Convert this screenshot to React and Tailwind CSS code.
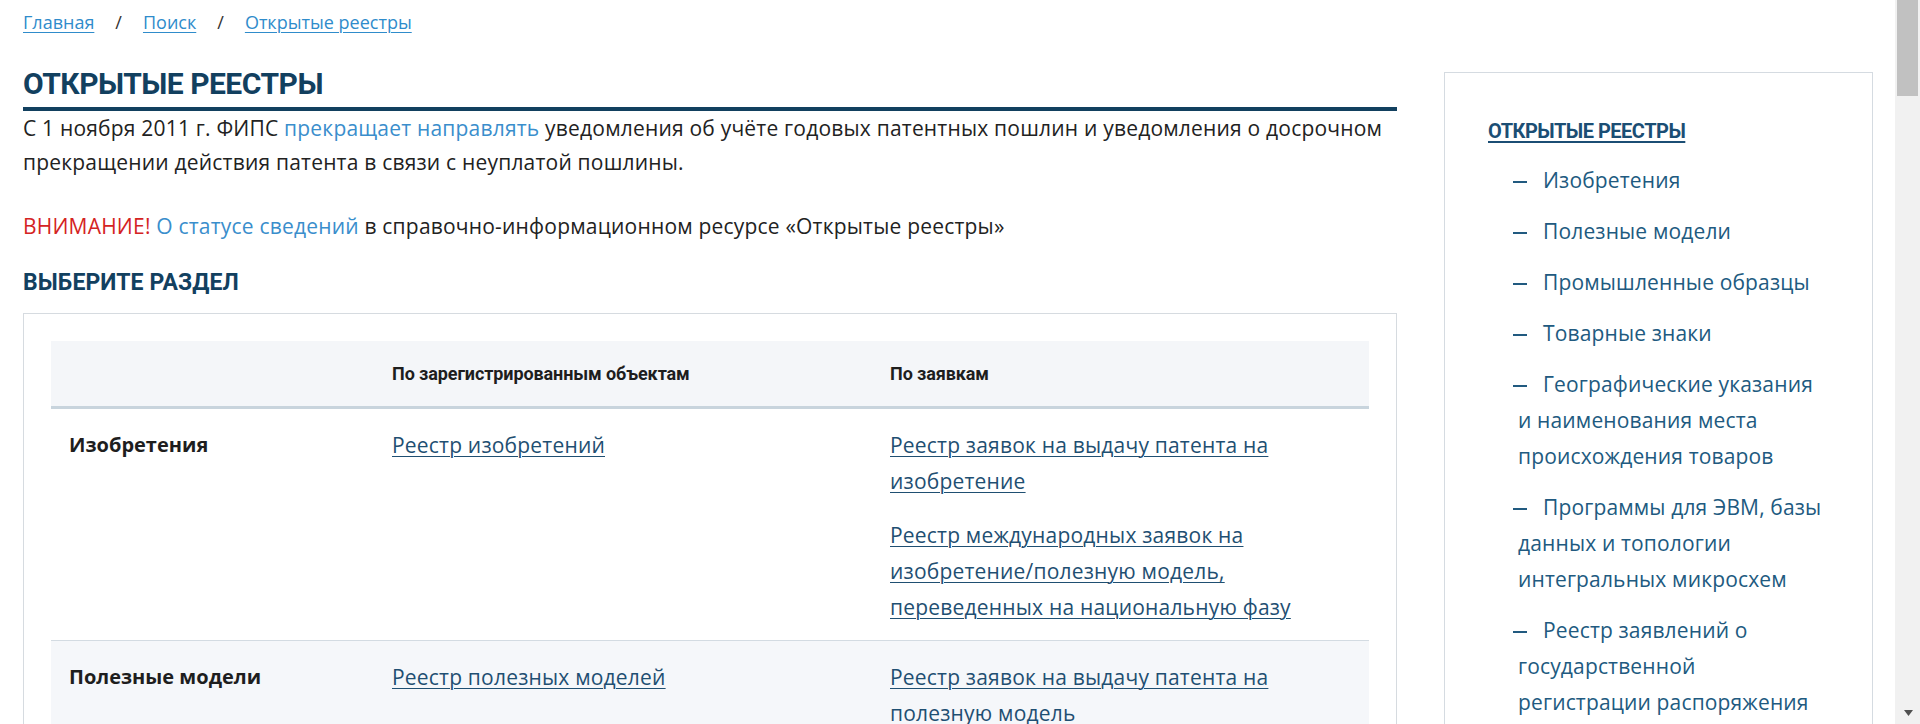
const sidebarItems = [
  ["Изобретения"],
  ["Полезные модели"],
  ["Промышленные образцы"],
  ["Товарные знаки"],
  ["Географические указания", "и наименования места", "происхождения товаров"],
  ["Программы для ЭВМ, базы", "данных и топологии", "интегральных микросхем"],
  ["Реестр заявлений о", "государственной", "регистрации распоряжения", "исключительным правом"],
];

function Lines({ lines }) {
  return lines.map((l, i) => (
    <span key={i}>
      {i > 0 && <br />}
      {l}
    </span>
  ));
}

function TLink({ lines }) {
  return (
    <a className="cursor-pointer text-[#1f4f72] underline decoration-1 underline-offset-[3px]">
      <Lines lines={lines} />
    </a>
  );
}

export default function App() {
  return (
    <div className="flex h-[724px] w-[1920px] overflow-hidden bg-white font-['Open_Sans',sans-serif] text-[21px] tracking-[0.2px] text-[#222]">
      <div className="flex min-w-0 flex-1 items-start">
        <main className="ml-[23px] w-[1374px] shrink-0">
          <nav className="mt-[10px] flex h-[24px] items-center text-[18px] leading-[24px] tracking-[0px]">
            <a className="cursor-pointer text-[#2f8ccb] underline decoration-1 underline-offset-[3px]">Главная</a>
            <span className="mx-[21px] text-[#333]">/</span>
            <a className="cursor-pointer text-[#2f8ccb] underline decoration-1 underline-offset-[3px]">Поиск</a>
            <span className="mx-[21px] text-[#333]">/</span>
            <a className="cursor-pointer text-[#2f8ccb] underline decoration-1 underline-offset-[3px]">Открытые реестры</a>
          </nav>

          <h1 className="mt-[30px] border-b-4 border-[#12405f] pb-[3px] font-['Roboto',sans-serif] text-[30px] leading-[40px] font-bold tracking-[-0.5px] text-[#12405f]">
            ОТКРЫТЫЕ РЕЕСТРЫ
          </h1>

          <p className="leading-[34px] whitespace-nowrap">
            С 1 ноября 2011 г. ФИПС <a className="cursor-pointer text-[#3a8ecc]">прекращает направлять</a> уведомления об учёте годовых патентных пошлин и уведомления о досрочном
            <br />
            прекращении действия патента в связи с неуплатой пошлины.
          </p>

          <p className="mt-[30px] leading-[34px] whitespace-nowrap">
            <span className="text-[#d42323]">ВНИМАНИЕ!</span> <a className="cursor-pointer text-[#3a8ecc]">О статусе сведений</a> в справочно-информационном ресурсе «Открытые реестры»
          </p>

          <h2 className="mt-[25px] font-['Roboto',sans-serif] text-[23px] leading-[30px] font-bold tracking-[0.1px] text-[#12405f]">
            ВЫБЕРИТЕ РАЗДЕЛ
          </h2>

          <div className="mt-[15px] border border-[#d6dbe0] px-[27px] pt-[27px] pb-[27px]">
            <div className="grid h-[68px] grid-cols-[323px_498px_497px] items-center border-b-[3px] border-[#c8d4dd] bg-[#f4f6f9] font-['Roboto',sans-serif] text-[18px] font-bold tracking-[-0.1px] text-[#1e1e1e]">
              <div className="px-[18px]"></div>
              <div className="px-[18px]">По зарегистрированным объектам</div>
              <div className="px-[18px]">По заявкам</div>
            </div>

            <div className="grid grid-cols-[323px_498px_497px] border-b border-[#d3dbe2] pt-[18px] pb-[15px] leading-[36px] whitespace-nowrap">
              <div className="px-[18px] text-[20px] font-bold tracking-[0px] text-[#1e1e1e]">Изобретения</div>
              <div className="px-[18px]">
                <TLink lines={["Реестр изобретений"]} />
              </div>
              <div className="flex flex-col gap-[18px] px-[18px]">
                <p>
                  <TLink lines={["Реестр заявок на выдачу патента на", "изобретение"]} />
                </p>
                <p>
                  <TLink lines={["Реестр международных заявок на", "изобретение/полезную модель,", "переведенных на национальную фазу"]} />
                </p>
              </div>
            </div>

            <div className="grid grid-cols-[323px_498px_497px] bg-[#f5f7fa] pt-[18px] pb-[15px] leading-[36px] whitespace-nowrap">
              <div className="px-[18px] text-[20px] font-bold tracking-[0px] text-[#1e1e1e]">Полезные модели</div>
              <div className="px-[18px]">
                <TLink lines={["Реестр полезных моделей"]} />
              </div>
              <div className="flex flex-col gap-[18px] px-[18px]">
                <p>
                  <TLink lines={["Реестр заявок на выдачу патента на", "полезную модель"]} />
                </p>
              </div>
            </div>
          </div>
        </main>

        <aside className="mt-[72px] ml-[47px] w-[429px] shrink-0 border border-[#d5dbe1] pt-[40px] pr-[20px] pb-[40px] pl-[43px]">
          <a className="cursor-pointer font-['Roboto',sans-serif] text-[20px] leading-[36px] font-bold tracking-[-0.5px] text-[#1b4e74] underline decoration-[1.5px] underline-offset-[3px]">
            ОТКРЫТЫЕ РЕЕСТРЫ
          </a>
          <ul className="mt-[13px] pl-[30px]">
            {sidebarItems.map((lines, i) => (
              <li key={i} className="mb-[15px] text-[21px] leading-[36px] tracking-[0.15px] whitespace-nowrap text-[#215a80]">
                <span className="ml-[-5px] inline-flex w-[30px] items-center align-middle">
                  <span className="inline-block h-[2px] w-[14px] bg-[#215a80]"></span>
                </span>
                <Lines lines={lines} />
              </li>
            ))}
          </ul>
        </aside>
      </div>

      <div className="flex w-[25px] shrink-0 flex-col bg-[#f1f1f1]">
        <div className="ml-[2px] h-[96px] w-[21px] bg-[#c1c1c1]"></div>
        <div className="flex-1"></div>
        <div className="flex h-[22px] items-center justify-center pl-[1px]">
          <svg width="9" height="6" viewBox="0 0 9 6">
            <path d="M0 0 L9 0 L4.5 6 Z" fill="#505050" />
          </svg>
        </div>
      </div>
    </div>
  );
}
